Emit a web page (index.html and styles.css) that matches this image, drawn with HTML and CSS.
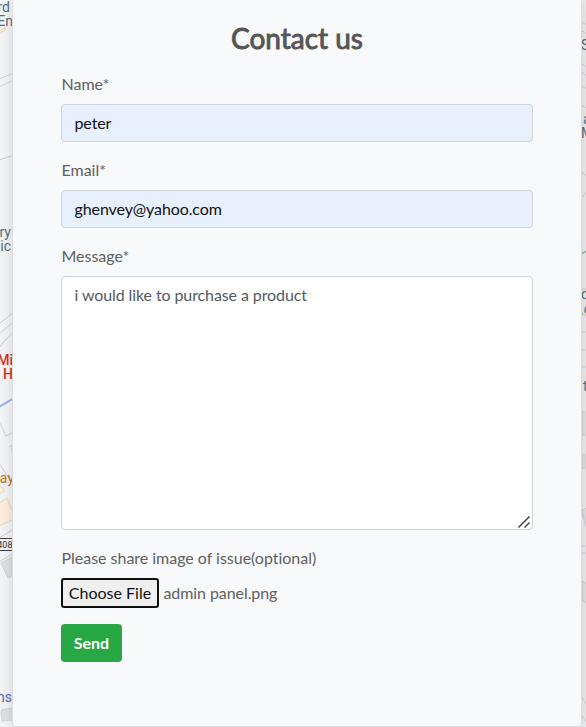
FILE: index.html
```html
<!DOCTYPE html>
<html lang="en">
<head>
<meta charset="utf-8">
<title>Contact us</title>
<link rel="stylesheet" href="styles.css">
</head>
<body>
<svg class="map" width="586" height="727" viewBox="0 0 586 727" aria-hidden="true">
  <rect class="east" x="570" y="0" width="16" height="727"/>
  <g class="road">
    <path d="M-1 79L14 73M-1 87L14 80M-1 160L14 155M-1 324L14 312M-1 334L14 321M-1 347L14 331M-1 421L6 436L14 432M9 447L12 445V452M-1 463L14 486M-1 538L14 529M-1 562L14 553M0 347L7 338M580 21L587 25M580 30L587 34M580 63L587 67M580 71L587 76M580 85L587 89M580 105L587 108M580 171L587 176M580 200L587 191M580 289H587M580 315H587M580 332H587M580 350H587M580 367H587M580 435H587M580 468H587M580 508L587 529M580 546H587M580 553H587M580 580L587 584M580 600L587 603M580 695L587 705M580 713L587 723"/>
  </g>
  <path class="block" d="M1 563L12 557V576L8 578ZM1 710L13 708V720L2 721ZM582 412H587V435H582ZM582 455L585 454V468H582ZM582 510L587 508V529ZM582 581L587 584V603L582 600Z"/>
  <path class="warm" d="M-1 503L7 498L14 515V519L-1 526Z"/>
  <path class="warm" d="M-1 484L5 491L-1 494"/>
  <path class="warm" d="M-1 31L5 28V30L-1 34"/>
  <path class="river" d="M-1 407L14 398"/>
  <path class="trail" d="M581 254L587 251"/>
  <g class="place">
    <text x="10" y="12" text-anchor="end">rd</text>
    <text x="13" y="26" text-anchor="end">En</text>
    <text x="11" y="237" text-anchor="end">ry</text>
    <text x="11" y="251" text-anchor="end">ic</text>
    <text x="581" y="50">S</text>
    <text x="583" y="124">a</text>
    <text x="581" y="138">M</text>
    <text x="581" y="299">d</text>
    <text x="580" y="314">.c</text>
    <text x="583" y="391">t</text>
  </g>
  <text class="hospital" x="13" y="365" text-anchor="end">Mi</text>
  <text class="hospital" x="13" y="379" text-anchor="end">H</text>
  <text class="food" x="14" y="483" text-anchor="end">May</text>
  <path class="shield" d="M-1 538.5H14M-1 550.5H14"/>
  <text class="route" x="12.5" y="548" text-anchor="end">408</text>
  <text class="transit" x="12" y="702" text-anchor="end">ns</text>
</svg>
<form class="card">
  <h2 class="title">Contact us</h2>
  <div class="group">
    <label for="name">Name*</label>
    <input class="field filled" id="name" type="text" value="peter">
  </div>
  <div class="group">
    <label for="email">Email*</label>
    <input class="field filled" id="email" type="text" value="ghenvey@yahoo.com">
  </div>
  <div class="group">
    <label for="message">Message*</label>
    <div class="message-box">
      <textarea class="field message" id="message" spellcheck="false">i would like to purchase a product</textarea>
      <svg class="grip" width="14" height="14" viewBox="0 0 14 14"><path d="M1.5 12.5L12.5 1.5M7.5 12.5L12.5 7.5"/></svg>
    </div>
  </div>
  <div class="group">
    <label>Please share image of issue(optional)</label>
    <div class="file">
      <button class="choose" type="button">Choose File</button>
      <span>admin panel.png</span>
    </div>
  </div>
  <button class="send" type="button">Send</button>
</form>
</body>
</html>
```
FILE: styles.css
```css
* {
  box-sizing: border-box;
}

body {
  margin: 0;
  height: 727px;
  overflow: hidden;
  background: #f5f6f7;
  color: #606060;
  font: 16px/24px Lato, sans-serif;
  font-variant-ligatures: none;
}

.map {
  position: absolute;
  left: 0;
  top: 0;
  font-family: Roboto, sans-serif;
}

.east {
  fill: #eeeeef;
}

.road {
  fill: none;
  stroke: #cfd1d6;
  stroke-width: 1;
}

.block {
  fill: #e2e2e3;
  stroke: #d4d4d6;
}

.warm {
  fill: #fff0e2;
  stroke: #f5d3ac;
}

.river {
  stroke: #8eb4f4;
  stroke-width: 2;
}

.trail {
  stroke: #34a853;
  stroke-width: 1;
}

.place {
  font-size: 14px;
  fill: #557080;
}

.hospital {
  font-size: 14px;
  font-weight: 500;
  fill: #d93025;
}

.food {
  font-size: 14px;
  fill: #c9730a;
}

.route {
  font-size: 9px;
  fill: #333;
}

.shield {
  stroke: #444;
}

.transit {
  font-size: 14px;
  fill: #5c67b8;
}

.card {
  position: relative;
  width: 570px;
  height: 727px;
  margin-left: 12px;
  padding: 21px 48px 0;
  background: #f8f9fb;
  border: 1px solid #dadde1;
  border-top: 0;
  border-radius: 0 0 4px 4px;
  box-shadow: 0 0 16px rgba(0, 0, 0, 0.15);
}

.title {
  margin: 0 0 17px;
  font-size: 28px;
  line-height: 34px;
  font-weight: 400;
  text-align: center;
  color: #555;
  -webkit-text-stroke: 0.9px #555;
}

.group {
  margin-bottom: 16px;
}

label {
  display: block;
  margin-bottom: 8px;
  padding-left: 0.5px;
  letter-spacing: -0.02px;
}

.field {
  display: block;
  width: 100%;
  height: 38px;
  padding: 6px 12.5px;
  border: 1px solid #ced4da;
  border-radius: 4px;
  background: #fff;
  color: #54595f;
  font: inherit;
  letter-spacing: -0.1px;
  outline: 0;
}

.filled {
  padding: 5px 12.5px 7px;
  background: #e8f0fe;
  color: #111;
}

.message-box {
  position: relative;
}

.message {
  height: 254px;
  resize: none;
}

.grip {
  position: absolute;
  right: 2px;
  bottom: 1px;
  fill: none;
  stroke: #444;
  stroke-width: 1.5;
}

.file {
  display: flex;
  align-items: center;
  gap: 4.5px;
  height: 30px;
  letter-spacing: -0.08px;
}

.choose {
  width: 98px;
  height: 30px;
  padding: 0;
  border: 2px solid #101010;
  border-radius: 3px;
  background: #efefef;
  color: #111;
  font: inherit;
}

.send {
  display: block;
  width: 61px;
  height: 38px;
  padding: 0;
  border: 0;
  border-radius: 4px;
  background: #28a745;
  color: #fff;
  font: bold 16px/24px Lato, sans-serif;
}
```
